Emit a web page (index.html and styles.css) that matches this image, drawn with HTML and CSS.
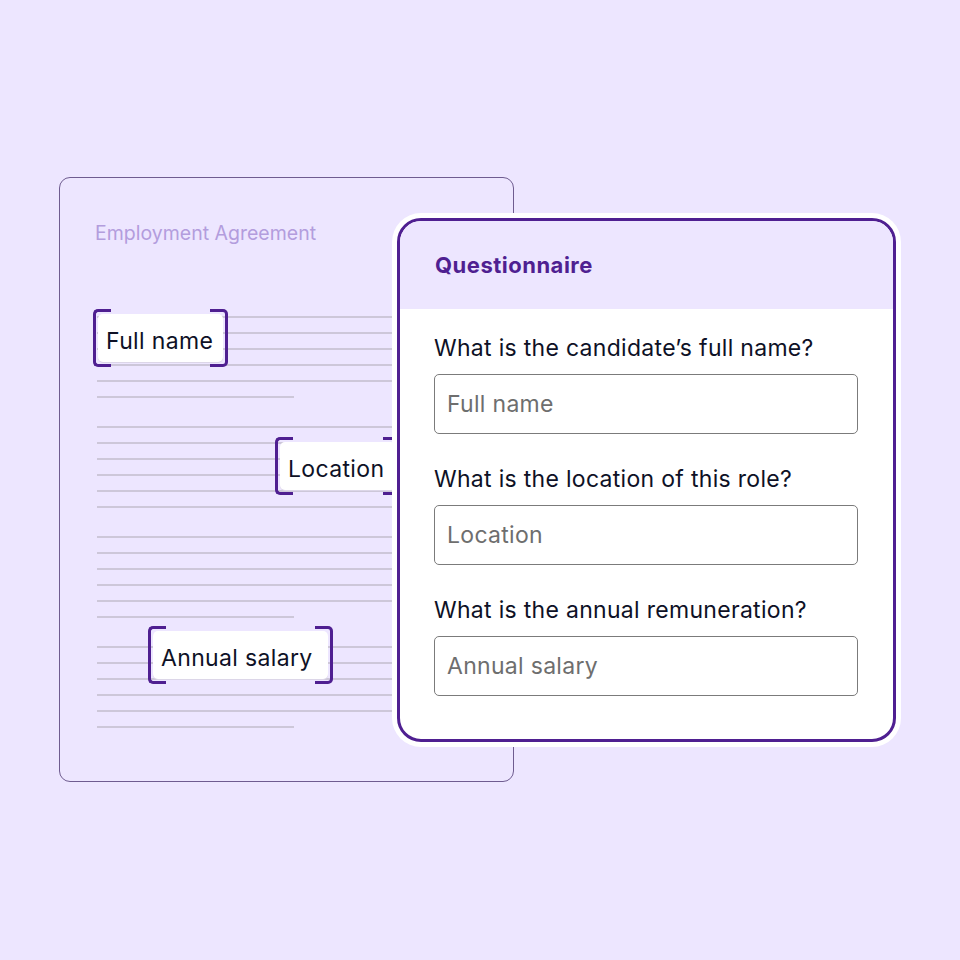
FILE: index.html
```html
<!DOCTYPE html>
<html lang="en">
<head>
<meta charset="utf-8">
<title>Questionnaire</title>
<link rel="stylesheet" href="styles.css">
</head>
<body>
<div class="stage">
  <div class="doc">
    <div class="doc-title">Employment Agreement</div>
    <div class="lines">
      <div class="group">
        <div class="line"></div><div class="line"></div><div class="line"></div><div class="line"></div><div class="line"></div><div class="line short"></div>
      </div>
      <div class="group">
        <div class="line"></div><div class="line"></div><div class="line"></div><div class="line"></div><div class="line"></div><div class="line"></div>
      </div>
      <div class="group">
        <div class="line"></div><div class="line"></div><div class="line"></div><div class="line"></div><div class="line"></div><div class="line short"></div>
      </div>
      <div class="group">
        <div class="line"></div><div class="line"></div><div class="line"></div><div class="line"></div><div class="line"></div><div class="line short"></div>
      </div>
    </div>
    <div class="tag tag-name"><span class="tag-box">Full name</span></div>
    <div class="tag tag-location"><span class="tag-box">Location</span></div>
    <div class="tag tag-salary"><span class="tag-box">Annual salary</span></div>
  </div>

  <div class="card">
    <div class="card-head">Questionnaire</div>
    <div class="card-body">
      <div class="field">
        <div class="question">What is the candidate’s full name?</div>
        <div class="input">Full name</div>
      </div>
      <div class="field">
        <div class="question">What is the location of this role?</div>
        <div class="input">Location</div>
      </div>
      <div class="field">
        <div class="question">What is the annual remuneration?</div>
        <div class="input">Annual salary</div>
      </div>
    </div>
  </div>
</div>
</body>
</html>
```
FILE: styles.css
```css
* { box-sizing: border-box; }
html, body {
  margin: 0;
  padding: 0;
  background: #ede6ff;
}
body {
  font-family: Inter, "Noto Sans", "Liberation Sans", sans-serif;
  color: #0e1126;
}
.stage {
  position: relative;
  width: 960px;
  height: 960px;
  padding: 177px 0 0 59px;
}
.doc {
  position: relative;
  width: 455px;
  height: 605px;
  border: 1px solid #6f5c90;
  border-radius: 11px;
  padding: 43px 37px 0 37px;
}
.doc-title {
  font-size: 19.5px;
  line-height: 24px;
  color: #b39ddd;
  margin-left: -2px;
}
.lines {
  margin-top: 71px;
  display: flex;
  flex-direction: column;
  gap: 28px;
}
.group {
  display: flex;
  flex-direction: column;
  gap: 14px;
}
.line {
  height: 2px;
  background: #cdc7d9;
  width: 100%;
}
.line.short { width: 197px; }

.tag {
  position: absolute;
  display: flex;
  padding: 5px;
}
.tag::before,
.tag::after {
  content: "";
  position: absolute;
  top: 0;
  bottom: 0;
  width: 15px;
  border: 3px solid #4f1f91;
}
.tag::before {
  left: 0;
  border-right: none;
  border-radius: 5px 0 0 5px;
}
.tag::after {
  right: 0;
  border-left: none;
  border-radius: 0 5px 5px 0;
}
.tag-box {
  display: block;
  flex: 1;
  background: #fff;
  border-radius: 5px;
  box-shadow: 0 1px 0 #dcd6e8;
  height: 48px;
  line-height: 48px;
  padding: 3px 8px 0 8px;
  font-size: 23px;
  color: #0e1126;
  letter-spacing: 0.35px;
  white-space: nowrap;
}
.tag-name { left: 33px; top: 131px; width: 135px; }
.tag-location { left: 215px; top: 259px; width: 126px; }
.tag-salary { left: 88px; top: 448px; width: 185px; }

.card {
  position: absolute;
  left: 397px;
  top: 218px;
  width: 499px;
  height: 524px;
  border: 3px solid #4f1f91;
  border-radius: 24px;
  box-shadow: 0 0 0 5px #fff;
  background: #fff;
  overflow: hidden;
  display: flex;
  flex-direction: column;
}
.card-head {
  height: 88px;
  background: #ede6ff;
  display: flex;
  align-items: center;
  padding-left: 35px;
  font-size: 22px;
  font-weight: 700;
  color: #4f1f91;
  letter-spacing: 0.5px;
}
.card-body {
  padding: 25px 35px 0 34px;
  display: flex;
  flex-direction: column;
  gap: 31px;
}
.field {
  display: flex;
  flex-direction: column;
  gap: 12px;
}
.question {
  font-size: 23px;
  line-height: 28px;
  color: #0e1126;
  letter-spacing: 0.3px;
  white-space: nowrap;
}
.input {
  height: 60px;
  border: 1.5px solid #7b7b7b;
  border-radius: 5px;
  padding-left: 12px;
  display: flex;
  align-items: center;
  font-size: 23px;
  color: #6e6e6e;
  letter-spacing: 0.3px;
}
```
